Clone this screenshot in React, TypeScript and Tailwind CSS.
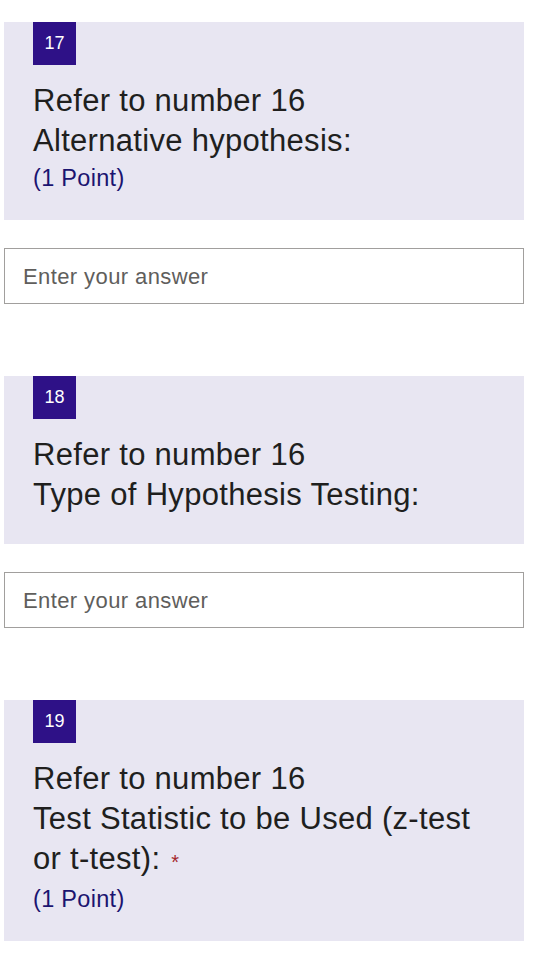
import React from 'react';

type Question = {
  num: number;
  lines: string[];
  required?: boolean;
  points?: string;
  answer?: boolean;
};

const questions: Question[] = [
  {
    num: 17,
    lines: ['Refer to number 16', 'Alternative hypothesis:'],
    points: '(1 Point)',
    answer: true,
  },
  {
    num: 18,
    lines: ['Refer to number 16', 'Type of Hypothesis Testing:'],
    answer: true,
  },
  {
    num: 19,
    lines: ['Refer to number 16', 'Test Statistic to be Used (z-test or t-test):'],
    required: true,
    points: '(1 Point)',
  },
];

function QuestionCard({ q }: { q: Question }) {
  return (
    <div
      className={`w-[520px] bg-[#e8e6f2] pl-[29px] pr-[29px] ${
        q.points ? 'pb-[25px]' : 'pb-[29px]'
      }`}
    >
      <div className="flex h-[43px] w-[43px] items-center justify-center bg-[#2e1187] text-[18px] text-white">
        {q.num}
      </div>
      <div className="mt-[16px] text-[31px] leading-[40px] tracking-[0.3px] text-[#201f1e]">
        {q.lines.map((line, i) => (
          <div key={i}>
            {line}
            {q.required && i === q.lines.length - 1 && (
              <span className="ml-[11px] text-[20px] text-[#a4262c]">*</span>
            )}
          </div>
        ))}
      </div>
      {q.points && (
        <div className="text-[23.5px] leading-[34px] tracking-[0.3px] text-[#1b1470]">
          {q.points}
        </div>
      )}
    </div>
  );
}

function AnswerBox() {
  return (
    <div className="mt-[28px] flex h-[56px] w-[520px] items-center border border-[#a19f9d] bg-white pl-[18px] text-[22px] tracking-[0.4px] text-[#605e5c]">
      Enter your answer
    </div>
  );
}

export default function App() {
  return (
    <div
      className="min-h-screen bg-white pt-[22px] pl-[4px]"
      style={{ fontFamily: '"Liberation Sans", Arial, sans-serif' }}
    >
      {questions.map((q, i) => (
        <div key={q.num} className={i === 0 ? '' : 'mt-[72px]'}>
          <QuestionCard q={q} />
          {q.answer && <AnswerBox />}
        </div>
      ))}
    </div>
  );
}
